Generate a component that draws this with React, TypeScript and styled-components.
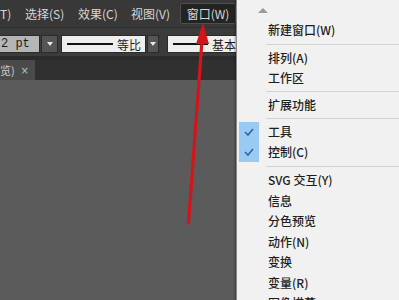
import React from "react";
import styled, { createGlobalStyle } from "styled-components";

const Global = createGlobalStyle`
  html, body { margin: 0; padding: 0; background: #5a5a5a; overflow: hidden; }
  #root { width: 399px; height: 300px; }
`;

const FONT = `"Noto Sans CJK SC", "Noto Sans", sans-serif`;

const Screen = styled.div`
  position: relative;
  width: 399px;
  height: 300px;
  overflow: hidden;
  display: flex;
  flex-direction: column;
  background: #5a5a5a;
  font-family: ${FONT};
`;

const MenuBar = styled.div`
  height: 27px;
  flex: none;
  display: flex;
  align-items: center;
  background: #383838;
  color: #d6d6d6;
  font-size: 12px;
  line-height: 14px;
`;

const MenuTitle = styled.div<{ $w: number; $active?: boolean }>`
  flex: none;
  width: ${(p) => p.$w}px;
  margin-right: ${(p) => (p.$active ? 0 : 14)}px;
  height: 21px;
  display: flex;
  align-items: center;
  justify-content: ${(p) => (p.$active ? "center" : "flex-start")};
  box-sizing: border-box;
  white-space: nowrap;
  ${(p) =>
    p.$active
      ? `background:#232323;border:1px solid #4e4e4e;border-radius:2px;margin-left:-4px;`
      : ``}
`;

const Toolbar = styled.div`
  height: 29px;
  flex: none;
  display: flex;
  align-items: flex-end;
  padding-bottom: 3px;
  box-sizing: border-box;
  background: #3b3b3b;
  border-top: 1px solid #303030;
`;

const Field = styled.div<{ $w: number; $bg: string; $ml: number }>`
  flex: none;
  width: ${(p) => p.$w}px;
  margin-left: ${(p) => p.$ml}px;
  height: 18px;
  box-sizing: border-box;
  background: ${(p) => p.$bg};
  border: 1px solid #2a2a2a;
  display: flex;
  align-items: center;
  gap: 4px;
  padding-left: 5px;
  font-size: 12px;
  color: #1c1c1c;
  overflow: hidden;
  white-space: nowrap;
`;

const MonoText = styled.span`
  font-family: "Liberation Mono", "DejaVu Sans Mono", monospace;
  font-size: 12px;
  margin-left: -4px;
`;

const StrokeLine = styled.span<{ $w: number }>`
  flex: none;
  width: ${(p) => p.$w}px;
  height: 2px;
  background: #111;
`;

const DropBtn = styled.div<{ $w: number }>`
  flex: none;
  width: ${(p) => p.$w}px;
  height: 18px;
  margin-left: 1px;
  box-sizing: border-box;
  background: #555555;
  border: 1px solid #2a2a2a;
  display: flex;
  align-items: center;
  justify-content: center;
  &::after {
    content: "";
    border-left: 3.5px solid transparent;
    border-right: 3.5px solid transparent;
    border-top: 4px solid #e8e8e8;
  }
`;

const Gutter = styled.div`
  height: 4px;
  flex: none;
  background: #2b2b2b;
`;

const TabRow = styled.div`
  height: 20px;
  flex: none;
  display: flex;
  background: #303030;
`;

const Tab = styled.div`
  width: 35px;
  box-sizing: border-box;
  background: #4a4a4a;
  color: #cfcfcf;
  font-size: 11px;
  display: flex;
  align-items: center;
  justify-content: space-between;
  padding-right: 6px;
  white-space: nowrap;
`;

const TabClose = styled.span`
  font-family: "DejaVu Sans", sans-serif;
  font-size: 10px;
  color: #bdbdbd;
`;

const Canvas = styled.div`
  flex: 1;
  background: #5b5b5b;
`;

const Dropdown = styled.div`
  position: absolute;
  left: 236px;
  top: 0;
  width: 170px;
  height: 320px;
  background: #f1f1f1;
  border-left: 1px solid #8a8a8a;
  box-shadow: -1px 0 2px rgba(0, 0, 0, 0.35);
  display: flex;
  flex-direction: column;
  font-size: 12px;
  font-weight: 500;
  color: #1e1e1e;
`;

const ScrollArrow = styled.div`
  height: 20px;
  flex: none;
  padding-left: 21px;
  display: flex;
  align-items: center;
  &::before {
    content: "";
    border-left: 5px solid transparent;
    border-right: 5px solid transparent;
    border-bottom: 5px solid #9a9a9a;
  }
`;

const Item = styled.div<{ $h?: number }>`
  height: ${(p) => p.$h ?? 20}px;
  flex: none;
  display: flex;
  align-items: center;
  line-height: 14px;
  white-space: nowrap;
`;

const CheckCell = styled.div<{ $on?: boolean }>`
  width: 20px;
  height: 100%;
  margin-left: 2px;
  margin-right: 9px;
  flex: none;
  display: flex;
  align-items: center;
  justify-content: center;
  background: ${(p) => (p.$on ? "#99cbf2" : "transparent")};
`;

const Sep = styled.div<{ $h?: number }>`
  height: ${(p) => p.$h ?? 7}px;
  flex: none;
  display: flex;
  align-items: center;
  padding-left: 29px;
  &::after {
    content: "";
    flex: 1;
    height: 1px;
    background: #d2d2d2;
  }
`;

const Overlay = styled.svg`
  position: absolute;
  left: 0;
  top: 0;
  pointer-events: none;
`;

const Check = () => (
  <svg width="10" height="8" viewBox="0 0 10 8">
    <polyline points="1,4 4,7 9,1" fill="none" stroke="#2f63a8" strokeWidth="1.6" />
  </svg>
);

type Entry =
  | { kind: "item"; label: string; checked?: boolean; h?: number }
  | { kind: "sep"; h?: number };

const entries: Entry[] = [
  { kind: "item", label: "新建窗口(W)" },
  { kind: "sep", h: 8 },
  { kind: "item", label: "排列(A)" },
  { kind: "item", label: "工作区" },
  { kind: "sep" },
  { kind: "item", label: "扩展功能", h: 20 },
  { kind: "sep" },
  { kind: "item", label: "工具", checked: true },
  { kind: "item", label: "控制(C)", checked: true },
  { kind: "sep", h: 8 },
  { kind: "item", label: "SVG 交互(Y)", h: 20.5 },
  { kind: "item", label: "信息", h: 20.5 },
  { kind: "item", label: "分色预览", h: 20.5 },
  { kind: "item", label: "动作(N)", h: 20.5 },
  { kind: "item", label: "变换", h: 20.5 },
  { kind: "item", label: "变量(R)", h: 20.5 },
  { kind: "item", label: "图像描摹", h: 20.5 },
];

export default function App() {
  return (
    <>
      <Global />
      <Screen>
        <MenuBar>
          <MenuTitle $w={11}>T)</MenuTitle>
          <MenuTitle $w={39}>选择(S)</MenuTitle>
          <MenuTitle $w={39}>效果(C)</MenuTitle>
          <MenuTitle $w={39}>视图(V)</MenuTitle>
          <MenuTitle $w={56} $active>
            窗口(W)
          </MenuTitle>
        </MenuBar>
        <Toolbar>
          <Field $w={41} $bg="#b5b5b5" $ml={-1}>
            <MonoText>2 pt</MonoText>
          </Field>
          <DropBtn $w={17} />
          <Field $w={85} $bg="#eeeeee" $ml={3}>
            <StrokeLine $w={46} />
            <span>等比</span>
          </Field>
          <DropBtn $w={12} />
          <Field $w={80} $bg="#eeeeee" $ml={8}>
            <StrokeLine $w={35} />
            <span>基本</span>
          </Field>
        </Toolbar>
        <Gutter />
        <TabRow>
          <Tab>
            <span>览)</span>
            <TabClose>×</TabClose>
          </Tab>
        </TabRow>
        <Canvas />
        <Dropdown>
          <ScrollArrow />
          {entries.map((e, i) =>
            e.kind === "sep" ? (
              <Sep key={i} $h={e.h} />
            ) : (
              <Item key={i} $h={e.h}>
                <CheckCell $on={e.checked}>{e.checked ? <Check /> : null}</CheckCell>
                {e.label}
              </Item>
            )
          )}
        </Dropdown>
        <Overlay width="399" height="300" viewBox="0 0 399 300">
          <line x1="188.5" y1="223" x2="202" y2="40" stroke="#d3141a" strokeWidth="3.2" strokeLinecap="round" />
          <polygon points="203,23 196,44 209,44" fill="#d3141a" />
        </Overlay>
      </Screen>
    </>
  );
}
